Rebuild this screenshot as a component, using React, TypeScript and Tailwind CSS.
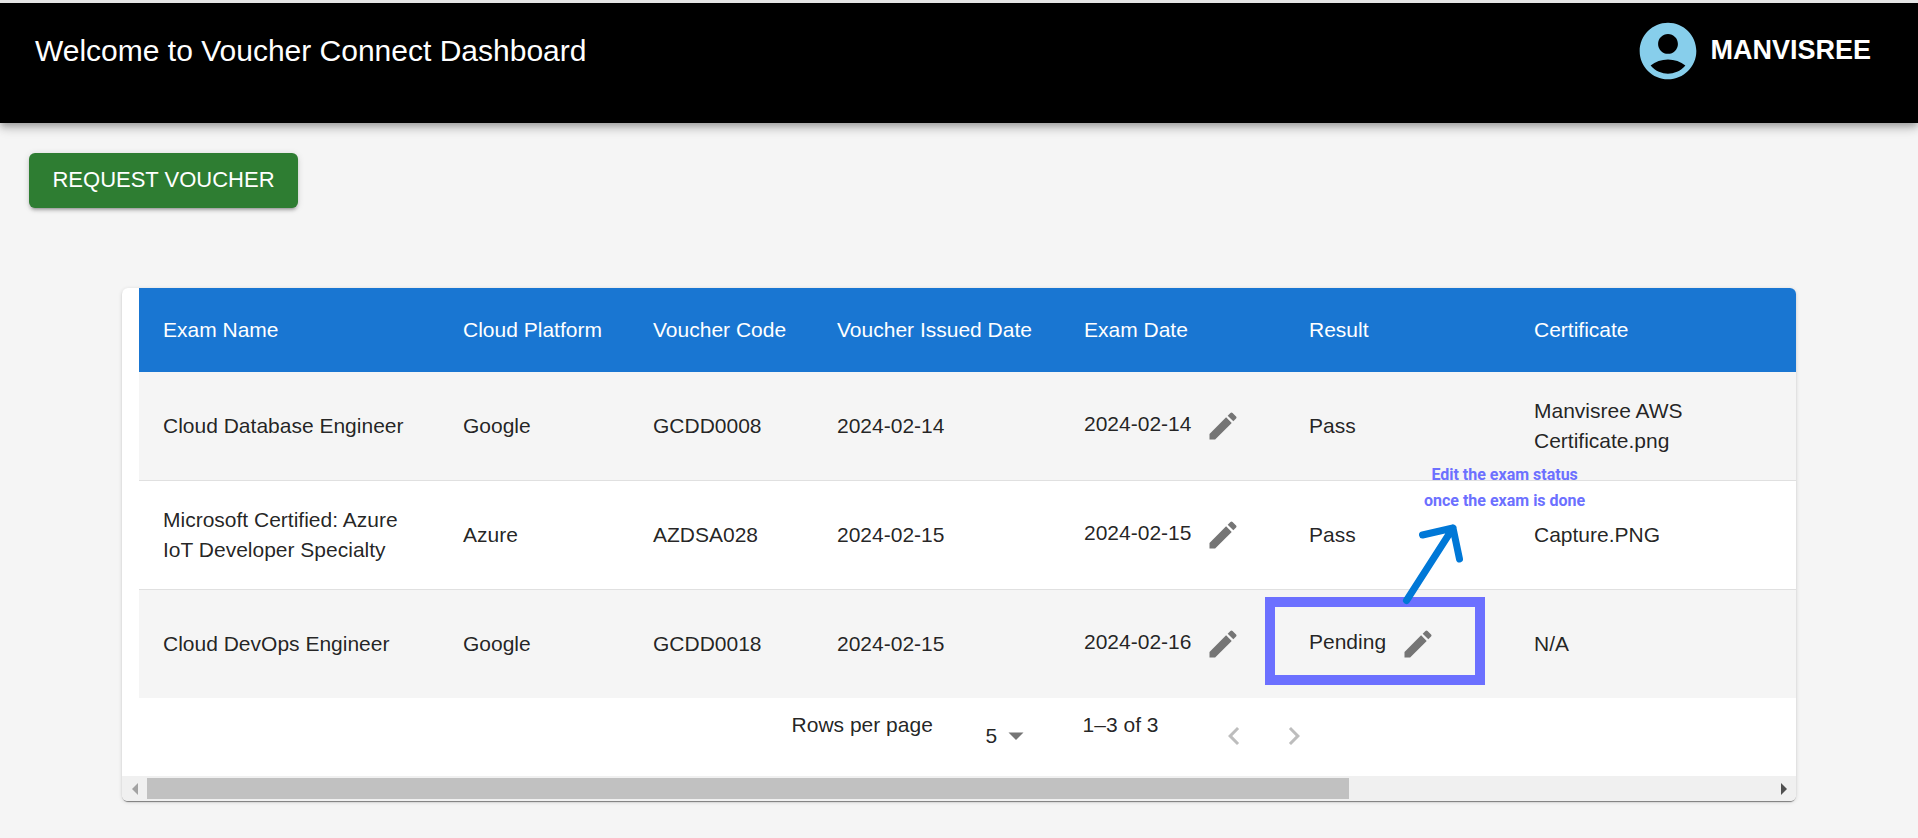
import { useState } from "react";
import type { ReactNode } from "react";

type Exam = {
  name: string;
  platform: string;
  code: string;
  issued: string;
  examDate: string;
  result: string;
  certificate: string;
};

const exams: Exam[] = [
  {
    name: "Cloud Database Engineer",
    platform: "Google",
    code: "GCDD0008",
    issued: "2024-02-14",
    examDate: "2024-02-14",
    result: "Pass",
    certificate: "Manvisree AWS Certificate.png",
  },
  {
    name: "Microsoft Certified: Azure IoT Developer Specialty",
    platform: "Azure",
    code: "AZDSA028",
    issued: "2024-02-15",
    examDate: "2024-02-15",
    result: "Pass",
    certificate: "Capture.PNG",
  },
  {
    name: "Cloud DevOps Engineer",
    platform: "Google",
    code: "GCDD0018",
    issued: "2024-02-15",
    examDate: "2024-02-16",
    result: "Pending",
    certificate: "N/A",
  },
];

const columns = [
  { label: "Exam Name", width: "w-[300px]" },
  { label: "Cloud Platform", width: "w-[190px]" },
  { label: "Voucher Code", width: "w-[184px]" },
  { label: "Voucher Issued Date", width: "w-[247px]" },
  { label: "Exam Date", width: "w-[225px]" },
  { label: "Result", width: "w-[225px]" },
  { label: "Certificate", width: "" },
];

function Icon({ d, className }: { d: string; className: string }) {
  return (
    <svg viewBox="0 0 24 24" fill="currentColor" aria-hidden="true" className={className}>
      <path d={d} />
    </svg>
  );
}

const ACCOUNT =
  "M12 2C6.48 2 2 6.48 2 12s4.48 10 10 10 10-4.48 10-10S17.52 2 12 2m0 4c1.93 0 3.5 1.57 3.5 3.5S13.93 13 12 13s-3.5-1.57-3.5-3.5S10.07 6 12 6m0 14c-2.03 0-4.43-.82-6.14-2.88C7.55 15.8 9.68 15 12 15s4.45.8 6.14 2.12C16.43 19.18 14.03 20 12 20";
const EDIT =
  "M3 17.25V21h3.75L17.81 9.94l-3.75-3.75zM20.71 7.04c.39-.39.39-1.02 0-1.41l-2.34-2.34a.9959.9959 0 0 0-1.41 0l-1.83 1.83 3.75 3.75z";
const LEFT = "M15.41 16.59 10.83 12l4.58-4.59L14 6l-6 6 6 6z";
const RIGHT = "M8.59 16.59 13.17 12 8.59 7.41 10 6l6 6-6 6z";

function Editable({ value, label }: { value: string; label: string }): ReactNode {
  return (
    <div className="flex items-center gap-3.5">
      <span className="pb-1 whitespace-nowrap">{value}</span>
      <button type="button" aria-label={label} className="text-[#757575]">
        <Icon d={EDIT} className="size-9" />
      </button>
    </div>
  );
}

function StatusHint() {
  return (
    <>
      <div className="pointer-events-none absolute top-[7px] -left-5 h-[88px] w-[220px] border-10 border-[#6c70ff]" />
      <svg
        viewBox="0 0 70 90"
        fill="none"
        stroke="#0078d7"
        strokeWidth="7"
        strokeLinecap="round"
        strokeLinejoin="round"
        aria-hidden="true"
        className="pointer-events-none absolute -top-[74px] left-[115px] h-[90px] w-[70px]"
      >
        <path d="M6.5 84.500 53 12M22.500 19 53 12 59.500 43" />
      </svg>
      <p className="pointer-events-none absolute -top-32 left-[139px] text-center font-['Roboto'] text-base leading-[26px] font-bold whitespace-nowrap text-[#6c70ff]">
        Edit the exam status
        <br />
        once the exam is done
      </p>
    </>
  );
}

function Pagination() {
  const [size, setSize] = useState("5");
  return (
    <div className="flex h-[78px] items-start pt-3 pl-[40%]">
      <label htmlFor="page-size" className="w-[194px] leading-[30px]">
        Rows per page
      </label>
      <div className="relative mt-[11px] flex w-[97px] items-center">
        <select
          id="page-size"
          value={size}
          onChange={(e) => setSize(e.target.value)}
          className="w-12 appearance-none bg-transparent leading-[30px] outline-none"
        >
          <option>5</option>
          <option>10</option>
          <option>25</option>
        </select>
        <svg viewBox="0 0 16 8" fill="#757575" aria-hidden="true" className="pointer-events-none absolute left-[22px] h-2 w-4">
          <path d="M0.5 0.500h15L8 8z" />
        </svg>
      </div>
      <span className="w-[133px] leading-[30px]">1–3 of 3</span>
      <div className="mt-2 flex gap-6 text-[#bdbdbd]">
        <button type="button" disabled aria-label="Previous page">
          <Icon d={LEFT} className="size-9" />
        </button>
        <button type="button" disabled aria-label="Next page">
          <Icon d={RIGHT} className="size-9" />
        </button>
      </div>
    </div>
  );
}

function ScrollTrack() {
  return (
    <div className="flex h-[25px] items-center bg-[#f0f0f0]">
      <button type="button" aria-label="Scroll left" className="flex w-[25px] justify-center">
        <svg viewBox="0 0 6 12" fill="#a3a3a3" className="h-3 w-1.5">
          <path d="M6 0v12L0 6z" />
        </svg>
      </button>
      <div className="flex-1">
        <div className="h-[21px] w-[74%] bg-[#c1c1c1]" />
      </div>
      <button type="button" aria-label="Scroll right" className="flex w-[25px] justify-center">
        <svg viewBox="0 0 6 12" fill="#505050" className="h-3 w-1.5">
          <path d="M0 0v12l6-6z" />
        </svg>
      </button>
    </div>
  );
}

export default function App() {
  return (
    <div className="min-h-screen bg-[#f5f5f5] font-['Liberation_Sans',Arial,sans-serif] text-[21px] text-black/87">
      <header className="flex h-[123px] items-start justify-between border-t-3 border-[#e4e4e4] bg-black pt-3.5 pr-[47px] pl-[35px] text-white shadow-[0_3px_6px_-1px_rgba(0,0,0,0.2),0_6px_8px_rgba(0,0,0,0.14),0_2px_15px_rgba(0,0,0,0.12)]">
        <h1 className="pt-2.5 text-[30px] leading-12">Welcome to Voucher Connect Dashboard</h1>
        <div className="flex items-center gap-2">
          <Icon d={ACCOUNT} className="size-[68px] text-[#87ceeb]" />
          <span className="pb-0.5 text-[27px] font-bold">MANVISREE</span>
        </div>
      </header>

      <main>
        <button
          type="button"
          className="mt-[30px] ml-[29px] block h-[55px] w-[269px] rounded-md bg-[#2e7d32] pb-0.5 text-[22px] text-white shadow-[0_4px_2px_-3px_rgba(0,0,0,0.2),0_3px_3px_rgba(0,0,0,0.14),0_1px_7px_rgba(0,0,0,0.12)]"
        >
          REQUEST VOUCHER
        </button>

        <section className="mx-[122px] mt-20 overflow-hidden rounded-md bg-white shadow-[0_3px_1px_-2px_rgba(0,0,0,0.3),0_1px_1px_rgba(0,0,0,0.2),0_1px_4px_rgba(0,0,0,0.14)]">
          <div className="pl-[17px]">
            <table className="w-full table-fixed border-separate border-spacing-0 text-left">
              <thead className="bg-[#1976d2] text-white">
                <tr>
                  {columns.map((c) => (
                    <th key={c.label} scope="col" className={`${c.width} h-[84px] pl-6 font-normal whitespace-nowrap`}>
                      {c.label}
                    </th>
                  ))}
                </tr>
              </thead>
              <tbody className="leading-[30px] [&_td]:h-[109px] [&_td]:border-b [&_td]:border-[#e0e0e0] [&_td]:px-6 [&_tr:last-child_td]:h-[108px] [&_tr:last-child_td]:border-b-0 [&_tr:nth-child(odd)]:bg-[#f5f5f5]">
                {exams.map((e) => (
                  <tr key={e.code}>
                    <td>{e.name}</td>
                    <td>{e.platform}</td>
                    <td>{e.code}</td>
                    <td>{e.issued}</td>
                    <td>
                      <Editable value={e.examDate} label="Edit exam date" />
                    </td>
                    <td className="relative">
                      {e.result === "Pending" ? (
                        <>
                          <Editable value={e.result} label="Edit result" />
                          <StatusHint />
                        </>
                      ) : (
                        e.result
                      )}
                    </td>
                    <td>
                      <div className="max-w-[177px]">{e.certificate}</div>
                    </td>
                  </tr>
                ))}
              </tbody>
            </table>
          </div>
          <Pagination />
          <ScrollTrack />
        </section>
      </main>
    </div>
  );
}
